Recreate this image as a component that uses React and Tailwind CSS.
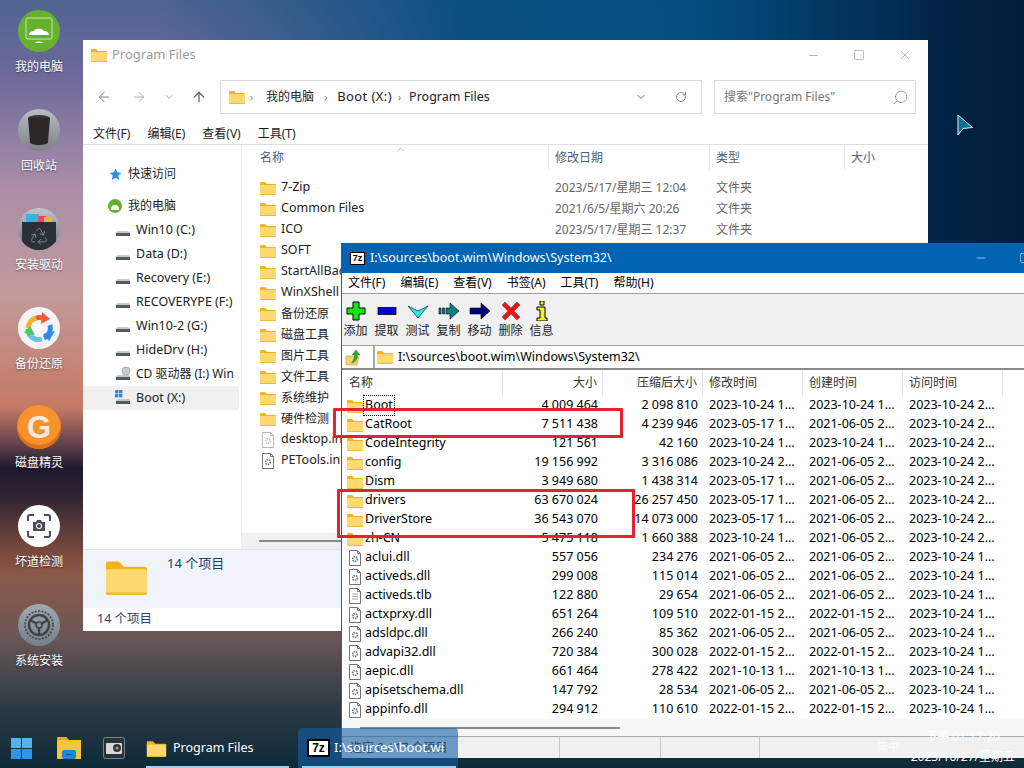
import { ChevronDown, ChevronUp, ArrowLeft, ArrowRight, ArrowUp, RotateCw, Search, Minus, Square, X, Recycle } from 'lucide-react';

const FONT = 'font-["Noto_Sans","Noto_Sans_CJK_SC",sans-serif]';

const fit = (t) => (/[\u4e00-\u9fff]/.test(t) ? 'text-[12px]' : 'text-[12.5px]');

const desktopIcons = [
  { label: '我的电脑', icon: <PcIcon /> },
  { label: '回收站', icon: <BinIcon /> },
  { label: '安装驱动', icon: <DriverIcon /> },
  { label: '备份还原', icon: <BackupIcon /> },
  { label: '磁盘精灵', icon: <DiskIcon /> },
  { label: '坏道检测', icon: <ScanIcon /> },
  { label: '系统安装', icon: <SetupIcon /> },
];

const sideDrives = [
  ['Win10 (C:)', 'drive'],
  ['Data (D:)', 'drive'],
  ['Recovery (E:)', 'drive'],
  ['RECOVERYPE (F:)', 'drive'],
  ['Win10-2 (G:)', 'drive'],
  ['HideDrv (H:)', 'drive'],
  ['CD 驱动器 (I:) Win', 'cd'],
  ['Boot (X:)', 'boot'],
];

const explorerRows = [
  ['7-Zip', '2023/5/17/星期三 12:04', '文件夹'],
  ['Common Files', '2021/6/5/星期六 20:26', '文件夹'],
  ['ICO', '2023/5/17/星期三 12:37', '文件夹'],
  ['SOFT', '', ''],
  ['StartAllBack', '', ''],
  ['WinXShell', '', ''],
  ['备份还原', '', ''],
  ['磁盘工具', '', ''],
  ['图片工具', '', ''],
  ['文件工具', '', ''],
  ['系统维护', '', ''],
  ['硬件检测', '', ''],
  ['desktop.ini', '', '', 'file'],
  ['PETools.ini', '', '', 'file'],
];

const zipRows = [
  ['Boot', '4 009 464', '2 098 810', '2023-10-24 1...', '2023-10-24 1...', '2023-10-24 2...', 'dir'],
  ['CatRoot', '7 511 438', '4 239 946', '2023-05-17 1...', '2021-06-05 2...', '2023-10-24 2...', 'dir'],
  ['CodeIntegrity', '121 561', '42 160', '2023-10-24 1...', '2023-10-24 1...', '2023-10-24 2...', 'dir'],
  ['config', '19 156 992', '3 316 086', '2023-10-24 2...', '2021-06-05 2...', '2023-10-24 2...', 'dir'],
  ['Dism', '3 949 680', '1 438 314', '2023-05-17 1...', '2021-06-05 2...', '2023-10-24 2...', 'dir'],
  ['drivers', '63 670 024', '26 257 450', '2023-05-17 1...', '2021-06-05 2...', '2023-10-24 2...', 'dir'],
  ['DriverStore', '36 543 070', '14 073 000', '2023-05-17 1...', '2021-06-05 2...', '2023-10-24 2...', 'dir'],
  ['zh-CN', '5 475 118', '1 660 388', '2023-10-24 1...', '2021-06-05 2...', '2023-10-24 2...', 'dir'],
  ['aclui.dll', '557 056', '234 276', '2021-06-05 2...', '2021-06-05 2...', '2023-10-24 1...', 'dll'],
  ['activeds.dll', '299 008', '115 014', '2021-06-05 2...', '2021-06-05 2...', '2023-10-24 1...', 'dll'],
  ['activeds.tlb', '122 880', '29 654', '2021-06-05 2...', '2021-06-05 2...', '2023-10-24 1...', 'tlb'],
  ['actxprxy.dll', '651 264', '109 510', '2022-01-15 2...', '2022-01-15 2...', '2023-10-24 1...', 'dll'],
  ['adsldpc.dll', '266 240', '85 362', '2021-06-05 2...', '2021-06-05 2...', '2023-10-24 1...', 'dll'],
  ['advapi32.dll', '720 384', '300 028', '2022-01-15 2...', '2022-01-15 2...', '2023-10-24 1...', 'dll'],
  ['aepic.dll', '661 464', '278 422', '2021-10-13 1...', '2021-10-13 1...', '2023-10-24 1...', 'dll'],
  ['apisetschema.dll', '147 792', '28 534', '2021-06-05 2...', '2021-06-05 2...', '2023-10-24 1...', 'dll'],
  ['appinfo.dll', '294 912', '110 610', '2022-01-15 2...', '2022-01-15 2...', '2023-10-24 1...', 'dll'],
];

function PcIcon() {
  return (
    <div className="w-[42px] h-[42px] rounded-full bg-[#66b22e] flex items-center justify-center">
      <svg width="30" height="30" viewBox="0 0 30 30">
        <rect x="2" y="2" width="26" height="21" rx="2" fill="none" stroke="#cfe8b8" strokeWidth="1" />
        <path d="M5 19c0-3 3-4 5-4 1-3 8-3 10 0 2 0 5 1 5 4z" fill="#fff" />
        <path d="M11 27c1-2 7-2 8 0z" fill="#fff" />
      </svg>
    </div>
  );
}

function BinIcon() {
  return (
    <div className="w-[42px] h-[42px] rounded-full bg-gradient-to-b from-[#b8bdc3] to-[#7d8289] flex items-center justify-center">
      <svg width="24" height="32" viewBox="0 0 24 32">
        <ellipse cx="12" cy="4" rx="11" ry="3" fill="#3a3436" />
        <path d="M1 4l2 24c0 2 4 3 9 3s9-1 9-3l2-24z" fill="#2d2628" />
      </svg>
    </div>
  );
}

function DriverIcon() {
  return (
    <div className="relative w-[42px] h-[42px] rounded-full bg-gradient-to-b from-[#c2c7cc] to-[#6e7379] overflow-hidden">
      <svg width="32" height="12" viewBox="0 0 32 12" className="absolute left-[5px] top-[6px]">
        <rect x="3" y="0" width="13" height="12" fill="#3bb0ee" />
        <rect x="15" y="2" width="8" height="10" fill="#e84a6a" />
        <rect x="21" y="3" width="8" height="9" fill="#e8b83a" />
      </svg>
      <div className="absolute left-[4px] top-[14px] w-[34px] h-[28px] bg-[#2b3036] rounded-b-[8px] flex items-center justify-center">
        <Recycle size={20} strokeWidth={1} className="text-[#8b939a]" />
      </div>
    </div>
  );
}

function BackupIcon() {
  return (
    <div className="w-[42px] h-[42px] rounded-full bg-[#f2f4f8] flex items-center justify-center">
      <svg width="34" height="34" viewBox="0 0 34 34" fill="none" strokeWidth="5">
        <path d="M6 17A11 11 0 0 1 14 7" stroke="#f6b026" />
        <path d="M14 7a11 11 0 0 1 7 0" stroke="#ee5a3c" />
        <path d="M20 1l8 7-9 5z" fill="#ee5a3c" />
        <path d="M28 14a11 11 0 0 1-6 13" stroke="#2f8be6" />
        <path d="M33 20l-6 10-6-7z" fill="#2f8be6" />
        <path d="M20 28a11 11 0 0 1-13-5" stroke="#6cc0e8" />
        <path d="M8 24a11 11 0 0 1-2-6" stroke="#4cc46a" />
        <path d="M2 22l6-7 5 9z" fill="#4cc46a" />
        <path d="M13 12l9 5-9 6z" fill="#ffffff" />
      </svg>
    </div>
  );
}

function DiskIcon() {
  return (
    <div className="w-[44px] h-[44px] -my-[1px] rounded-full bg-[#f7922c] shadow-[inset_0_-4px_0_#e0701a] flex items-center justify-center">
      <span className='text-[#f2ece6] text-[31px] font-bold leading-none font-["Liberation_Sans",sans-serif]'>G</span>
    </div>
  );
}

function ScanIcon() {
  return (
    <div className="w-[42px] h-[42px] rounded-full bg-white flex items-center justify-center">
      <svg width="26" height="26" viewBox="0 0 26 26" fill="none" stroke="#4a4f55" strokeWidth="2">
        <path d="M2 8V4a2 2 0 0 1 2-2h4M18 2h4a2 2 0 0 1 2 2v4M24 18v4a2 2 0 0 1-2 2h-4M8 24H4a2 2 0 0 1-2-2v-4" />
        <path d="M7 9h3l1-2h4l1 2h3v9H7z" fill="#4a4f55" stroke="none" />
        <circle cx="13" cy="13" r="3" fill="#fff" stroke="none" />
        <circle cx="13" cy="13" r="2" fill="#4a4f55" stroke="none" />
      </svg>
    </div>
  );
}

function SetupIcon() {
  return (
    <div className="w-[42px] h-[42px] rounded-full bg-gradient-to-b from-[#a0a9b2] to-[#76808a] flex items-center justify-center">
      <svg width="32" height="32" viewBox="0 0 32 32" fill="none" stroke="#3f4347">
        <circle cx="16" cy="16" r="14" strokeWidth="1.6" strokeDasharray="2 1.4" />
        <circle cx="16" cy="16" r="10" strokeWidth="2.4" />
        <path d="M16 16L7 11M16 16l9-5M16 16v10" strokeWidth="2.4" />
        <circle cx="16" cy="16" r="3" fill="#8b959e" strokeWidth="1.6" />
      </svg>
    </div>
  );
}

function Folder({ w = 16, h = 14 }) {
  return (
    <svg width={w} height={h} viewBox="0 0 16 14" className="shrink-0">
      <path d="M0 2a1 1 0 0 1 1-1h4l2 2h8a1 1 0 0 1 1 1v1H0z" fill="#f5b21b" />
      <path d="M0 4h15a1 1 0 0 1 1 1v8a1 1 0 0 1-1 1H1a1 1 0 0 1-1-1z" fill="#fdd96f" />
      <path d="M0 13h16v.2a.8.8 0 0 1-.8.8H.8a.8.8 0 0 1-.8-.8z" fill="#eeb93f" />
    </svg>
  );
}

function DriveIcon({ kind }) {
  return (
    <svg width="16" height="16" viewBox="0 0 16 16" className="shrink-0">
      {kind === 'boot' && (
        <g fill="#2a8fe0">
          <rect x="0" y="0" width="3.4" height="3.4" />
          <rect x="4" y="0" width="3.4" height="3.4" />
          <rect x="0" y="4" width="3.4" height="3.4" />
          <rect x="4" y="4" width="3.4" height="3.4" />
        </g>
      )}
      {kind === 'cd' && <circle cx="11" cy="5" r="4" fill="#c9ccd0" stroke="#8b8f94" strokeWidth="0.6" />}
      <path d="M2 9h12l1 2H1z" fill="#c7cacd" />
      <rect x="1" y="11" width="14" height="3" fill="#55595c" />
    </svg>
  );
}

function FileIcon({ gear = true, dark }) {
  return (
    <svg width="14" height="16" viewBox="0 0 14 16" className="shrink-0">
      <path d="M1.5.5h8l3 3v12h-11z" fill="#fff" stroke={dark ? '#6f7378' : '#b6babd'} />
      <path d="M9.5.5v3h3" fill="none" stroke={dark ? '#6f7378' : '#b6babd'} />
      {gear ? (
        <circle cx="7" cy="9" r="2.4" fill="none" stroke={dark ? '#6f7a85' : '#c2c6ca'} strokeWidth="1.6" strokeDasharray="1.4 0.8" />
      ) : (
        <path d="M4 6h6M4 8.5h6M4 11h6" stroke="#8a8e92" strokeWidth="0.8" />
      )}
    </svg>
  );
}

function DesktopIcons() {
  return (
    <div className="absolute left-0 top-[10px] w-[78px] flex flex-col items-center gap-[33px]">
      {desktopIcons.map((d) => (
        <div key={d.label} className="flex flex-col items-center gap-[6px] h-[66px]">
          {d.icon}
          <span className="text-[12px] leading-[18px] text-white [text-shadow:0_1px_2px_rgba(0,0,0,0.5)]">{d.label}</span>
        </div>
      ))}
    </div>
  );
}

function ExplorerWindow() {
  return (
    <div className="absolute left-[83px] top-[40px] w-[845px] h-[591px] bg-white flex flex-col text-[#1a1a1a]">
      <div className="h-[30px] flex items-center pl-[8px] shrink-0">
        <Folder />
        <span className="ml-[5px] text-[13px] text-[#9a9a9a]">Program Files</span>
        <div className="ml-auto flex items-center gap-[33px] pr-[16px] text-[#858585]">
          <Minus size={13} strokeWidth={1.2} />
          <Square size={12} strokeWidth={1} />
          <X size={14} strokeWidth={1} />
        </div>
      </div>
      <div className="h-[34px] mt-[10px] flex items-center shrink-0">
        <div className="w-[137px] flex items-center pl-[13px] text-[#777]">
          <ArrowLeft size={16} strokeWidth={1.4} />
          <ArrowRight size={16} strokeWidth={1.4} className="ml-[19px] text-[#aaa]" />
          <ChevronDown size={10} strokeWidth={1.6} className="ml-[17px]" />
          <ArrowUp size={16} strokeWidth={2} className="ml-[17px] text-[#666]" />
        </div>
        <div className="w-[482px] h-[34px] border border-[#d9d9d9] flex items-center pl-[8px] pr-[14px] text-[#222]">
          <Folder />
          <span className="ml-[5px] text-[10px] text-[#777]">›</span>
          <span className="ml-[13px] text-[12px]">我的电脑</span>
          <span className="ml-[10px] text-[10px] text-[#777]">›</span>
          <span className="ml-[10px] text-[13px] tracking-[0.4px]">Boot (X:)</span>
          <span className="ml-[6px] text-[10px] text-[#777]">›</span>
          <span className="ml-[8px] text-[12.5px]">Program Files</span>
          <ChevronDown size={12} strokeWidth={2} className="ml-auto text-[#666]" />
          <RotateCw size={12} strokeWidth={1.5} className="ml-[28px] text-[#666]" />
        </div>
        <div className="ml-[12px] w-[202px] h-[34px] border border-[#d9d9d9] flex items-center pl-[9px] pr-[6px]">
          <span className="text-[12px] text-[#777]">搜索"Program Files"</span>
          <Search size={17} strokeWidth={1} className="ml-auto text-[#777] -scale-x-100" />
        </div>
      </div>
      <div className="h-[31px] pt-[10px] flex items-center gap-[17px] pl-[10px] text-[12px] border-b border-[#e0e0e0] shrink-0">
        <span>文件(F)</span>
        <span>编辑(E)</span>
        <span>查看(V)</span>
        <span>工具(T)</span>
      </div>
      <div className="flex-1 flex min-h-0">
        <div className="w-[159px] border-r border-[#eeeeee] shrink-0 pt-[17px] flex flex-col">
          <div className="h-[24px] flex items-center pl-[26px] gap-[6px] text-[12px]">
            <svg width="13" height="13" viewBox="0 0 24 24" fill="#2f8de4"><path d="M12 1l3 7 8 1-6 5 2 8-7-4-7 4 2-8-6-5 8-1z" /></svg>
            快速访问
          </div>
          <div className="h-[24px] mt-[8px] flex items-center pl-[25px] gap-[6px] text-[12px]">
            <span className="w-[14px] h-[14px] rounded-full bg-[#66b22e] flex items-end justify-center">
              <span className="w-[8px] h-[5px] mb-[3px] rounded-t-full bg-white" />
            </span>
            我的电脑
          </div>
          {sideDrives.map(([name, kind]) => (
            <div key={name} className={`h-[24px] w-[156px] flex items-center pl-[32px] gap-[5px] shrink-0 ${kind === 'boot' ? 'bg-[#f0f0f0]' : ''}`}>
              <DriveIcon kind={kind} />
              <span className={`whitespace-nowrap ${name.startsWith('CD') ? 'text-[12px]' : 'text-[12.5px]'}`}>{name}</span>
            </div>
          ))}
        </div>
        <div className="flex-1 flex flex-col min-w-0">
          <div className="relative h-[25px] flex items-center text-[12px] text-[#4c607a] shrink-0">
            <ChevronUp size={11} strokeWidth={1.2} className="absolute left-[153px] -top-[1px] text-[#888]" />
            <span className="w-[307px] pl-[18px] pt-[1px] h-full flex items-center border-r border-[#e8e8e8]">名称</span>
            <span className="w-[161px] pl-[6px] pt-[1px] h-full flex items-center border-r border-[#e8e8e8]">修改日期</span>
            <span className="w-[135px] pl-[6px] pt-[1px] h-full flex items-center border-r border-[#e8e8e8]">类型</span>
            <span className="pl-[6px] pt-[1px]">大小</span>
          </div>
          <div className="flex-1 pt-[7px]">
            {explorerRows.map(([name, date, type, kind]) => (
              <div key={name} className="h-[21px] flex items-center">
                <div className="w-[307px] pl-[18px] flex items-center gap-[5px]">
                  {kind === 'file' ? <span className="w-[16px] flex justify-center"><FileIcon dark={name === 'PETools.ini'} /></span> : <Folder />}
                  <span className={`${fit(name)} text-[#222]`}>{name}</span>
                </div>
                <span className="w-[161px] pl-[6px] text-[12px] text-[#666]">{date}</span>
                <span className="pl-[6px] text-[12px] text-[#666]">{type}</span>
              </div>
            ))}
          </div>
          <div className="h-[16px] bg-[#f0f0f0] flex items-center pl-[17px] shrink-0">
            <div className="w-[200px] h-[2px] bg-[#8a8a8a]" />
          </div>
        </div>
      </div>
      <div className="h-[59px] bg-[#eff4fb] flex shrink-0 pl-[21px] pt-[9px] border-t border-[#dbe6f2]">
        <Folder w={45} h={36} />
        <span className="ml-[18px] -mt-[5px] text-[13px] text-[#1f3a5f]">14 个项目</span>
      </div>
      <div className="h-[23px] flex items-center pl-[14px] text-[12.5px] text-[#2c4565] shrink-0">14 个项目</div>
    </div>
  );
}

function ToolIcon({ name }) {
  if (name === 'add') return <svg width="20" height="20" viewBox="0 0 20 20"><path d="M7 1h6v6h6v6h-6v6H7v-6H1V7h6z" fill="#12e812" stroke="#000" strokeWidth="1" /></svg>;
  if (name === 'extract') return <svg width="20" height="20" viewBox="0 0 20 20"><rect x="1" y="6.5" width="18" height="7" fill="#0000d8" stroke="#000" strokeWidth="0.8" /></svg>;
  if (name === 'test') return <svg width="22" height="20" viewBox="0 0 22 20"><path d="M1 5l10 5 10-5-10 12z" fill="#22eef0" stroke="#333" strokeWidth="0.8" /></svg>;
  if (name === 'copy') return <svg width="22" height="20" viewBox="0 0 22 20"><path d="M1 7h2v6H1zM4.5 7h2v6h-2zM8 7h4V2l9 8-9 8v-5H8z" fill="#0c7f7f" stroke="#000" strokeWidth="0.6" /></svg>;
  if (name === 'move') return <svg width="22" height="20" viewBox="0 0 22 20"><path d="M1 7h11V2l9 8-9 8v-5H1z" fill="#00007a" stroke="#000" strokeWidth="0.6" /></svg>;
  if (name === 'del') return <svg width="20" height="20" viewBox="0 0 20 20"><path d="M4 1l6 6 6-6 3 3-6 6 6 6-3 3-6-6-6 6-3-3 6-6-6-6z" fill="#f01010" stroke="#444" strokeWidth="0.5" /></svg>;
  return <svg width="14" height="20" viewBox="0 0 14 20"><path d="M5 0h4v4H5zM2 6h8v11h2v3H2v-3h3v-8H2z" fill="#f6ee1a" stroke="#000" strokeWidth="1" /></svg>;
}

function ZipWindow() {
  const tools = [['add', '添加'], ['extract', '提取'], ['test', '测试'], ['copy', '复制'], ['move', '移动'], ['del', '删除'], ['info', '信息']];
  return (
    <div className="absolute left-[341px] top-[243px] w-[683px] h-[515px] bg-white border-l border-[#555] flex flex-col overflow-hidden text-black">
      <div className="h-[30px] bg-[#0063b1] flex items-center pl-[8px] shrink-0 text-white">
        <span className='w-[15px] h-[13px] bg-white text-black border border-black text-[9px] font-bold leading-[11px] text-center font-["Liberation_Sans",sans-serif]'>7z</span>
        <span className="ml-[5px] text-[12.5px]">I:\sources\boot.wim\Windows\System32\</span>
        <div className="ml-auto flex items-center gap-[31px] -mr-[7px]">
          <Minus size={14} strokeWidth={1} />
          <Square size={12} strokeWidth={1} />
        </div>
      </div>
      <div className="h-[20px] flex items-center gap-[15px] pl-[6px] text-[12px] shrink-0">
        {['文件(F)', '编辑(E)', '查看(V)', '书签(A)', '工具(T)', '帮助(H)'].map((m) => <span key={m}>{m}</span>)}
      </div>
      <div className="h-[53px] bg-[#f0f0f0] border-y border-[#a0a0a0] flex shrink-0">
        <div className="-ml-[2px] flex">
          {tools.map(([k, t]) => (
            <div key={k} className="w-[31px] flex flex-col items-center pt-[5px]">
              <div className="h-[24px] flex items-center justify-center"><ToolIcon name={k} /></div>
              <span className="text-[12px] leading-[16px] text-[#222] whitespace-nowrap">{t}</span>
            </div>
          ))}
        </div>
      </div>
      <div className="h-[24px] flex items-center pl-[3px] shrink-0 border-b-2 border-[#8a8a8a]">
        <svg width="17" height="17" viewBox="0 0 17 17">
          <path d="M1 7h6l2 1h5l-2 8H1z" fill="#f5d56a" stroke="#b89a3a" strokeWidth="0.6" />
          <path d="M11 1l4 5h-2.5c0 4-2 7-6 8 2-2 3-5 3-8H7z" fill="#2eae2e" stroke="#1c6f1c" strokeWidth="0.5" />
        </svg>
        <div className="ml-[11px] h-full flex-1 flex items-center pl-[2px] border-l-2 border-[#a8a8a8]">
          <Folder />
          <span className="ml-[5px] text-[12.5px]">I:\sources\boot.wim\Windows\System32\</span>
        </div>
      </div>
      <div className="h-[26px] flex items-center text-[12px] text-[#333] shrink-0">
        <span className="w-[161px] pl-[7px] pb-[1px] h-full flex items-center border-r border-[#e5e5e5]">名称</span>
        <span className="w-[100px] pr-[5px] pb-[1px] h-full flex items-center justify-end border-r border-[#e5e5e5]">大小</span>
        <span className="w-[100px] pr-[5px] pb-[1px] h-full flex items-center justify-end border-r border-[#e5e5e5]">压缩后大小</span>
        <span className="w-[100px] pl-[6px] pb-[1px] h-full flex items-center border-r border-[#e5e5e5]">修改时间</span>
        <span className="w-[100px] pl-[6px] pb-[1px] h-full flex items-center border-r border-[#e5e5e5]">创建时间</span>
        <span className="w-[100px] pl-[6px] pb-[1px] h-full flex items-center border-r border-[#e5e5e5]">访问时间</span>
      </div>
      <div className="flex-1 min-h-0">
        {zipRows.map((r, i) => (
          <div key={r[0]} className="h-[19px] flex items-center text-[12.5px] whitespace-nowrap">
            <div className="w-[161px] pl-[5px] flex items-center gap-[1px]">
              <span className="w-[16px] flex justify-center">{r[6] === 'dir' ? <Folder /> : <FileIcon gear={r[6] === 'dll'} dark />}</span>
              <span className={i === 0 ? 'outline-1 outline-dotted outline-black px-[1px]' : 'px-[1px]'}>{r[0]}</span>
            </div>
            <span className="w-[100px] pr-[5px] text-right">{r[1]}</span>
            <span className="w-[100px] pr-[5px] text-right">{r[2]}</span>
            <span className="w-[100px] pl-[6px]">{r[3]}</span>
            <span className="w-[100px] pl-[6px]">{r[4]}</span>
            <span className="w-[100px] pl-[6px]">{r[5]}</span>
          </div>
        ))}
      </div>
      <div className="h-[17px] bg-[#f7f7f7] flex items-center pl-[18px] shrink-0">
        <div className="w-[260px] h-[2px] bg-[#8a8a8a]" />
      </div>
      <div className="h-[22px] bg-[#f0f0f0] border-t border-[#a8a8a8] flex items-center text-[12px] text-[#333] shrink-0">
        <span className="w-[218px] h-full flex items-center pl-[8px] border-r border-[#c8c8c8]">选定 0 / 17 个项目</span>
        <span className="w-[101px] h-full border-r border-[#c8c8c8]" />
        <span className="w-[99px] h-full border-r border-[#c8c8c8]" />
      </div>
    </div>
  );
}

function RedBoxes() {
  return (
    <>
      <div className="absolute left-[333px] top-[408px] w-[290px] h-[30px] border-[3px] border-[#e8202f] rounded-[1px]" />
      <div className="absolute left-[337px] top-[489px] w-[298px] h-[49px] border-[3px] border-[#e8202f] rounded-[1px]" />
    </>
  );
}

function Taskbar() {
  return (
    <div className="absolute left-0 right-0 top-[728px] h-[40px] flex items-center text-white">
      <div className="ml-[11px] w-[21px] h-[21px] grid grid-cols-2 gap-[1px]">
        <span className="bg-[#4fb4f0]" />
        <span className="bg-[#4fb4f0]" />
        <span className="bg-[#2f96e2]" />
        <span className="bg-[#2f96e2]" />
      </div>
      <svg width="24" height="22" viewBox="0 0 24 22" className="ml-[25px]">
        <path d="M0 0h9l3 3h12v19H0z" fill="#f8c53a" />
        <path d="M0 0h9l3 3H0z" fill="#eea81c" />
        <rect x="5" y="13" width="14" height="9" rx="2" fill="#1c86d8" />
        <rect x="9" y="17" width="6" height="1" fill="#0a4f8a" />
      </svg>
      <svg width="22" height="22" viewBox="0 0 22 22" className="ml-[22px]">
        <rect x="0.5" y="0.5" width="21" height="21" rx="2" fill="#283238" stroke="#77828a" />
        <rect x="3" y="6" width="16" height="11" rx="1" fill="#d8d8d8" />
        <circle cx="14" cy="11" r="4" fill="#333" />
        <circle cx="14" cy="11" r="1.6" fill="#999" />
      </svg>
      <div className="ml-[21px] w-[143px] h-full relative flex items-center">
        <Folder w={21} h={17} />
        <span className="ml-[6px] text-[12.5px]">Program Files</span>
        <span className="absolute left-0 right-0 bottom-0 h-[2px] bg-[#9fd0ee]" />
      </div>
      <div className="ml-[9px] w-[160px] h-full relative flex items-center pl-[9px] rounded-t-[4px] bg-[#145fa5]/60">
        <span className='w-[23px] h-[18px] bg-white text-black border-2 border-black text-[12px] font-bold leading-[14px] text-center font-["Liberation_Sans",sans-serif]'>7z</span>
        <span className="ml-[4px] text-[13px] whitespace-nowrap">I:\sources\boot.wi</span>
        <span className="absolute left-[4px] right-[2px] bottom-0 h-[2px] bg-[#9fd0ee]" />
      </div>
      <span className="ml-[419px] mt-[-1px] text-[11px] text-white/80">简中</span>
      <div className="ml-auto pr-[9px] flex flex-col items-end text-[12px] leading-[20px] text-white -mt-[2px]">
        <span className="pr-[15px]">下午 01:17:20</span>
        <span>2023/10/27/星期五</span>
      </div>
    </div>
  );
}

export default function App() {
  return (
    <div className={`relative w-[1024px] h-[768px] overflow-hidden ${FONT} [background-repeat:no-repeat] [background-size:100%_300px,100%_100%] bg-[linear-gradient(90deg,rgba(3,78,128,0)_15%,rgba(3,78,128,0.9)_45%,rgba(3,78,128,1)_68%,rgba(2,36,70,1)_92%,rgba(1,28,58,1)_100%),linear-gradient(180deg,#4f6490_0%,#6d6a9a_10%,#a98da8_24%,#c29a9c_38%,#c47a64_53%,#6a4650_57.5%,#1e1a2e_61%,#2a2233_64%,#7a4a3c_72%,#8a5a48_75%,#6a5656_83%,#2c3a44_92%,#0e2a38_100%)]`}>
      <DesktopIcons />
      <ExplorerWindow />
      <svg width="17" height="22" viewBox="0 0 17 22" className="absolute left-[957px] top-[114px]">
        <path d="M1 1L15.5 13.5L6 14.5L1 21z" fill="#0d6f8c" stroke="#dff4f8" strokeWidth="1" />
      </svg>
      <ZipWindow />
      <RedBoxes />
      <Taskbar />
    </div>
  );
}
